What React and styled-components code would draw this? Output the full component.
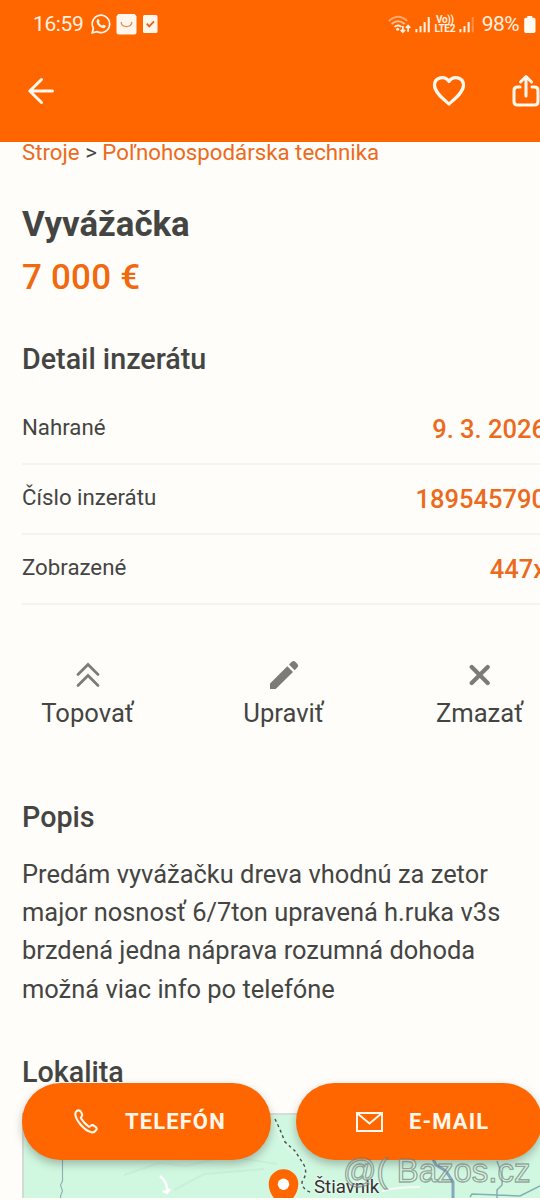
import React from "react";
import styled, { createGlobalStyle } from "styled-components";

const GlobalStyle = createGlobalStyle`
  * {
    box-sizing: border-box;
  }

  body {
    margin: 0;
    background: #fffdfa;
    font-family: Roboto, "Noto Sans", sans-serif;
  }

  h1, h2, p {
    margin: 0;
  }

  svg {
    display: block;
    flex-shrink: 0;
  }
`;

const details = [
  { label: "Nahrané", value: "9. 3. 2026" },
  { label: "Číslo inzerátu", value: "189545790" },
  { label: "Zobrazené", value: "447x" },
];

const description = [
  "Predám vyvážačku dreva vhodnú za zetor",
  "major nosnosť 6/7ton upravená h.ruka v3s",
  "brzdená jedna náprava rozumná dohoda",
  "možná viac info po telefóne",
];

const StatusBar = () => (
  <Status>
    <Clock>16:59</Clock>
    <svg width="20" height="20" viewBox="0 0 20 20" fill="none" stroke="#fff3e6">
      <path d="M1.2 18.8 2.4 14.3A8.7 8.7 0 1 1 5.8 17.6Z" strokeWidth="1.7" />
      <path
        d="M6.4 5.3c.6-.6 1.2-.5 1.5.1l.7 1.6c.2.6-.7 1.1-.6 1.6.5 1.3 1.7 2.5 3.1 3 .6.1 1-1.1 1.6-.9l1.8.9c.6.4.2 1.7-.6 2.2-2.5 1.5-8.6-2.4-8.3-6.6.1-.8.4-1.5.8-1.9Z"
        fill="#fff3e6"
        stroke="none"
      />
    </svg>
    <svg width="21" height="21" viewBox="0 0 21 21">
      <path d="M2.2 0h16.6l1.7 2.5v16q0 2-2 2h-16q-2 0-2-2v-16Z" fill="#fff7ec" />
      <path d="M5.2 8.3q.3 4.3 5.3 4.3t5.3-4.3" fill="none" stroke="#e88a50" strokeWidth="1.3" strokeLinecap="round" />
    </svg>
    <svg width="15" height="18" viewBox="0 0 15 18">
      <rect width="14.5" height="18" rx="1.5" fill="#fff7ec" />
      <path d="m3.7 8.7 2.5 2.6 4.8-5" fill="none" stroke="#e2671d" strokeWidth="1.9" />
    </svg>
    <StatusRight>
      <svg width="24" height="19" viewBox="0 0 25 20" fill="none" stroke="#fff0e0">
        <path d="M.8 6.3Q10.5-2.6 20.2 6.3" strokeWidth="1.9" opacity=".5" />
        <path d="M3.6 9.5q6.9-5.8 13.8 0" strokeWidth="2" opacity=".65" />
        <path d="M6.7 12.5q3.8-3 7.4 0" strokeWidth="2" />
        <circle cx="10" cy="15" r="1.6" fill="#fff0e0" stroke="none" />
        <path d="M15.5 11.5V18m-2.3-2.3 2.3 2.4 2.3-2.4M21 17.5V11m-2.3 2.5 2.3-2.4 2.3 2.4" strokeWidth="1.8" />
      </svg>
      <Signal />
      <Network>
        <span>Vo))</span>
        <span>LTE2</span>
      </Network>
      <Signal weak />
      <Percent>98%</Percent>
      <svg width="12" height="17" viewBox="0 0 12 17" fill="#fffaf2">
        <path d="M3.3 0h5v1.8h1.5q1.7 0 1.7 1.7v11.7q0 1.7-1.7 1.7h-8Q.2 16.9.2 15.2V3.5q0-1.7 1.7-1.7h1.4Z" />
      </svg>
    </StatusRight>
  </Status>
);

const Signal = ({ weak }) => (
  <svg width="16" height="17" viewBox="0 0 16 17" fill="#fff0e0">
    <rect x=".4" y="13" width="2" height="3.3" />
    <rect x="4.5" y="10" width="2" height="6.3" />
    <rect x="8.6" y="6" width="2.1" height="10.3" />
    <rect x="12.7" y="1" width="2.1" height="15.3" opacity={weak ? 0.3 : 1} />
  </svg>
);

const LocationMap = () => (
  <MapBox>
    <svg width="540" height="86" viewBox="0 0 540 86" fill="none">
      <path d="M100 60l35-12 28 3 40-10 50 8M150 75l30-16 60-5" stroke="#c8efd9" strokeWidth="2" />
      <path d="M250 0q4 30 23 41t-8 48" stroke="#dbf7e6" strokeWidth="3" />
      <path d="M38.5 40v26l-2 4 2 6-2 5 1 8" stroke="#8faeb4" strokeWidth="1.1" />
      <path d="M136 61q8 6 7 17m-4-2 4 2 3-4" stroke="#fff" strokeWidth="2.5" />
      <path d="M251 4q5 10 10 23 7 6 10 9l9 14q4 8-2 17 0 7 8 10" stroke="#40534c" strokeWidth="1.4" strokeDasharray="3 3" />
      <path d="M358 76q15-4 38-4" stroke="#f6f9f6" strokeWidth="2" />
      <path d="M408 42l4 8 10 6 7 11v17" stroke="#86a8bb" strokeWidth="3" />
      <path d="M473 46q6 15 5 24l-5 5v10M446 82l2-3 48 2 20-10" stroke="#86aeb4" strokeWidth="1.5" />
    </svg>
    <Pin width="31" height="40" viewBox="0 0 31 40">
      <path d="M15.5.3A14.8 14.8 0 0 0 .7 15C.7 25 8 32 15.5 40 23 32 30.300 25 30.300 15A14.800 14.800 0 0 0 15.500.3Z" fill="#ff6600" />
      <circle cx="15.5" cy="15.3" r="5.7" fill="#fff" />
    </Pin>
    <PlaceName>Štiavnik</PlaceName>
  </MapBox>
);

const App = () => {
  return (
    <Screen>
      <GlobalStyle />
      <Header>
        <StatusBar />
        <Toolbar>
          <svg width="28" height="28" viewBox="0 0 28 28" fill="none" stroke="#fff8ee" strokeWidth="3" strokeLinecap="round" strokeLinejoin="round">
            <path d="M25.5 14H3M14.5 2.5 2.8 14 14.5 25.5" />
          </svg>
          <ToolbarRight>
            <svg width="34" height="32" viewBox="0 0 34 32" fill="none" stroke="#fff8ee" strokeWidth="3.2" strokeLinejoin="round">
              <path d="M17 29C12 24.7 2.5 17.5 2.5 10.3 2.5 1.8 13 .2 17 6.5 21 .2 31.5 1.8 31.5 10.3 31.5 17.5 22 24.7 17 29Z" />
            </svg>
            <svg width="28" height="34" viewBox="0 0 28 34" fill="none" stroke="#fff8ee" strokeWidth="3" strokeLinecap="round" strokeLinejoin="round">
              <path d="M8 13H5.5Q2 13 2 16.5v11Q2 31 5.5 31h17q3.5 0 3.5-3.5v-11Q26 13 22.5 13H20M14 22V2.5M8.5 8 14 2.5 19.5 8" />
            </svg>
          </ToolbarRight>
        </Toolbar>
      </Header>

      <Content>
        <Breadcrumb>
          <a>Stroje</a> &gt; <a>Poľnohospodárska technika</a>
        </Breadcrumb>
        <Title>Vyvážačka</Title>
        <Price>7 000 €</Price>

        <SectionTitle>Detail inzerátu</SectionTitle>
        <DetailList>
          {details.map((d) => (
            <DetailRow key={d.label}>
              <DetailLabel>{d.label}</DetailLabel>
              <DetailValue>{d.value}</DetailValue>
            </DetailRow>
          ))}
        </DetailList>

        <Actions>
          <Action>
            <svg width="24" height="26" viewBox="0 0 24 26" fill="none" stroke="#7b7b78" strokeWidth="2.7" strokeLinecap="round">
              <path d="M2 12.5 12 2.5l10 10M2 23.5l10-10 10 10" />
            </svg>
            Topovať
          </Action>
          <Action>
            <svg width="30" height="30" viewBox="0 0 30 30" fill="#7b7b78">
              <path d="M1 23.5 18.300 6.300l5.700 5.700L6.700 29H1ZM20 4.600l3-3q1.500-1.300 3 0l2.600 2.600q1.300 1.500 0 3l-3 3Z" />
            </svg>
            Upraviť
          </Action>
          <Action>
            <svg width="22" height="22" viewBox="0 0 22 22" fill="none" stroke="#7b7b78" strokeWidth="4.2" strokeLinecap="round">
              <path d="M2.700 3l16 16M18.700 3l-16 16" />
            </svg>
            Zmazať
          </Action>
        </Actions>

        <SectionTitle>Popis</SectionTitle>
        <Description>
          {description.map((line) => (
            <span key={line}>{line}</span>
          ))}
        </Description>

        <SectionTitle>Lokalita</SectionTitle>
        <LocationMap />
      </Content>

      <ContactBar>
        <ContactButton $width="249px" $gap="27px" $left="52px">
          <svg width="24" height="25" viewBox="0 0 24 25" fill="none" stroke="#fff8ee" strokeWidth="2.1" strokeLinejoin="round">
            <path d="M3 1.8Q5.5.5 7 3 8.8 5.8 7.800 7.200 6.500 8.300 7 9.300 10.500 15 14.800 17.600 16 17.800 17 16.600 18.500 15.500 20.500 17.200 23.500 19 22.400 20.800 20.500 24 17.500 23.300 12 22 6.500 15.500 1.500 9.500 1.300 5 1.200 3 3 1.800Z" style={undefined} />
          </svg>
          TELEFÓN
        </ContactButton>
        <ContactButton $width="246px" $gap="26px" $left="60px">
          <svg width="27" height="20" viewBox="0 0 27 20" fill="none" stroke="#fff8ee" strokeWidth="2">
            <path d="M1 1h25v18H1ZM1.5 1.5l12 10 12-10" />
          </svg>
          E-MAIL
        </ContactButton>
      </ContactBar>
      <Watermark>@( Bazos.cz</Watermark>
    </Screen>
  );
};

const Screen = styled.div`
  position: relative;
  width: 540px;
  height: 1200px;
  overflow: hidden;
  background: #fffdfa;
  color: #444542;
`;

const Header = styled.header`
  height: 142px;
  background: #ff6600;
`;

const Status = styled.div`
  display: flex;
  align-items: center;
  height: 48px;
  padding-left: 33px;
  color: #fff0e0;

  > svg + svg {
    margin-left: 5px;
  }

  > svg + svg + svg {
    margin-left: 6px;
  }
`;

const Clock = styled.span`
  width: 58px;
  font-size: 21px;
  letter-spacing: -0.4px;
`;

const StatusRight = styled.div`
  display: flex;
  align-items: center;
  gap: 3px;
  margin-left: auto;
  padding-right: 4px;
`;

const Network = styled.div`
  display: flex;
  flex-direction: column;
  align-items: center;
  width: 22px;
  font-size: 10px;
  line-height: 9px;
  font-weight: 700;
  letter-spacing: -0.3px;
`;

const Percent = styled.span`
  margin: 0 2px 0 4px;
  font-size: 21px;
  letter-spacing: -0.6px;
`;

const Toolbar = styled.div`
  display: flex;
  align-items: center;
  justify-content: space-between;
  height: 86px;
  padding-left: 27px;
`;

const ToolbarRight = styled.div`
  display: flex;
  align-items: center;
  gap: 46px;
`;

const Content = styled.main`
  width: 546px;
  padding-left: 22px;
`;

const Breadcrumb = styled.div`
  height: 56px;
  font-size: 22.25px;
  line-height: 20px;

  a {
    color: #ec6a1c;
  }
`;

const Title = styled.h1`
  height: 56px;
  font-size: 34.8px;
  font-weight: 700;
  line-height: 52px;
`;

const Price = styled.p`
  height: 82px;
  color: #f0690f;
  font-size: 35px;
  font-weight: 500;
  line-height: 48px;
  letter-spacing: 0.2px;
`;

const SectionTitle = styled.h2`
  font-size: 28.7px;
  font-weight: 500;
  line-height: 46px;
  white-space: nowrap;
`;

const DetailList = styled.div`
  padding-top: 13px;
`;

const DetailRow = styled.div`
  display: flex;
  justify-content: space-between;
  height: 70px;
  border-bottom: 2px solid #f5f2f0;
`;

const DetailLabel = styled.span`
  font-size: 22.25px;
  line-height: 65px;
`;

const DetailValue = styled.span`
  color: #ec6a1c;
  font-size: 25.5px;
  font-weight: 500;
  line-height: 69px;
`;

const Actions = styled.div`
  display: flex;
  justify-content: space-between;
  width: 523px;
  height: 189px;
  padding-top: 54px;
`;

const Action = styled.div`
  display: flex;
  flex-direction: column;
  align-items: center;
  width: 131px;
  font-size: 25.6px;
  line-height: 44px;

  svg {
    height: 32px;
  }
`;

const Description = styled.div`
  display: flex;
  flex-direction: column;
  height: 209px;
  padding-top: 15px;
  font-size: 25.45px;
  line-height: 38.2px;
  white-space: nowrap;
`;

const MapBox = styled.div`
  position: relative;
  width: 518px;
  height: 85px;
  margin-top: 18px;
  border-top: 2px solid #d6dcd8;
  border-left: 2px solid #d3dad6;
  background: #d0f7e0;
  overflow: hidden;
`;

const Pin = styled.svg`
  position: absolute;
  left: 244px;
  top: 54px;
`;

const PlaceName = styled.span`
  position: absolute;
  left: 290px;
  top: 60px;
  color: #333;
  font-size: 18.7px;
  line-height: 24px;
  text-shadow: 0 0 2px #fff, 0 0 3px #fff;
`;

const ContactBar = styled.div`
  position: absolute;
  top: 1083px;
  left: 22px;
  display: flex;
  gap: 25px;
`;

const ContactButton = styled.button`
  display: flex;
  align-items: center;
  gap: ${(p) => p.$gap};
  width: ${(p) => p.$width};
  height: 77px;
  padding: 0 0 0 ${(p) => p.$left};
  border: 0;
  border-radius: 39px;
  background: #ff6600;
  box-shadow: 0 4px 8px rgba(60, 70, 60, 0.35);
  color: #fff8ee;
  font-family: inherit;
  font-size: 22px;
  font-weight: 700;
  letter-spacing: 1.1px;
`;

const Watermark = styled.div`
  position: absolute;
  left: 343px;
  top: 1151px;
  color: rgba(255, 255, 255, 0.25);
  font-family: "Liberation Sans", Arial, sans-serif;
  font-size: 33px;
  line-height: 40px;
  white-space: nowrap;
  -webkit-text-stroke: 1.3px rgba(110, 120, 115, 0.65);
`;

export default App;
